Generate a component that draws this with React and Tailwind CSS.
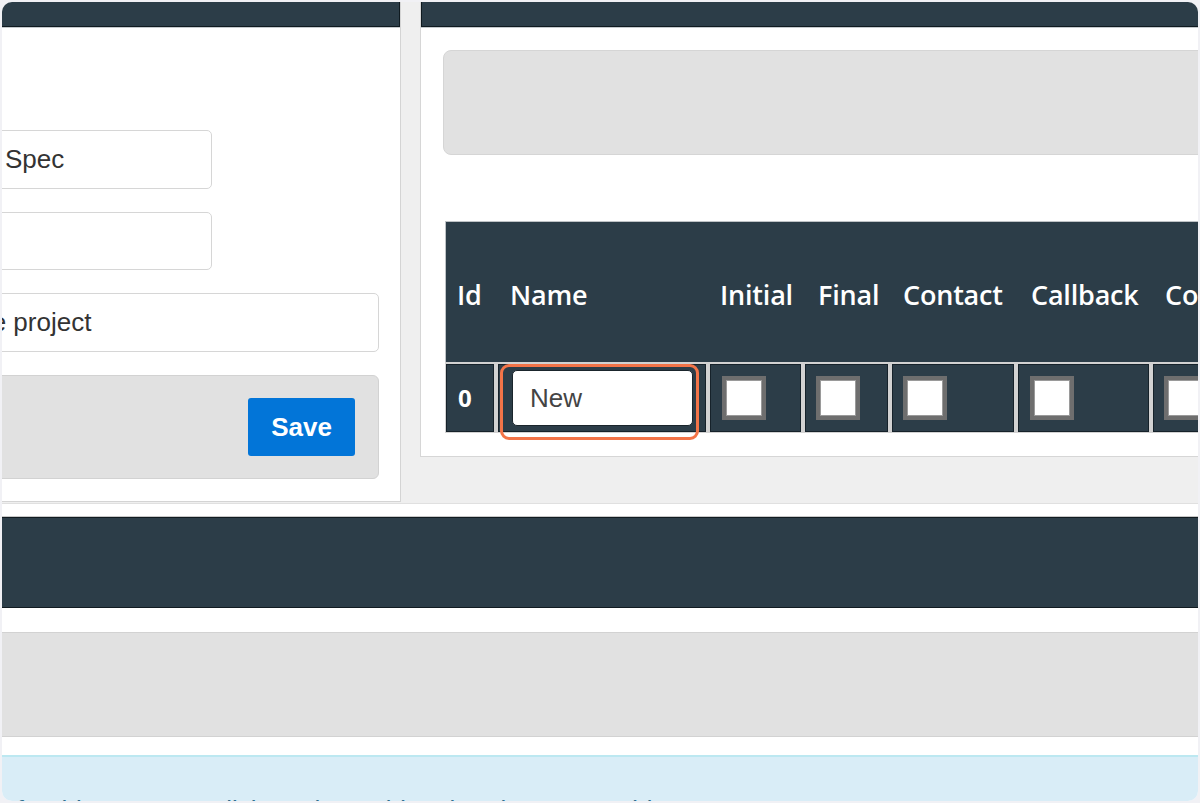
import React from "react";

const DARK = "bg-[#2c3d48]";

function Checkbox() {
  return <div className="w-[44px] h-[44px] bg-white border-[4px] border-[#6e6e6e] shadow-[inset_0_0_0_1px_#9a9a9a]" />;
}

export default function App() {
  return (
    <div className="w-[1200px] h-[803px] bg-[#f1f1f5] p-[2px]">
      <div className="w-full h-full rounded-[10px] overflow-hidden bg-white flex flex-col font-['Liberation_Sans',Arial,sans-serif]">
        {/* top row */}
        <div className="flex h-[502px] shrink-0 bg-[#efefef] border-b border-[#e0e0e0]">
          {/* left panel */}
          <div className="w-[399px] h-[500px] shrink-0 bg-white border-r border-[#d4d4d4] border-b flex flex-col overflow-hidden">
            <div className={`h-[25px] shrink-0 ${DARK} border-b border-r border-[#0f1a20] shadow-[0_1px_0_#c5cacd]`} />
            <div className="flex flex-col gap-[23px] mt-[103px]">
              <div className="-ml-[20px] w-[230px] h-[59px] border border-[#d6d6d6] rounded-[5px] flex items-center pl-[22px] text-[26px] text-[#333]">
                Spec
              </div>
              <div className="-ml-[20px] w-[230px] h-[58px] border border-[#d6d6d6] rounded-[5px]" />
              <div className="-ml-[20px] w-[397px] h-[59px] border border-[#d6d6d6] rounded-[5px] flex items-center overflow-hidden text-[26px] text-[#333]">
                <span className="ml-[-13px] whitespace-nowrap">the project</span>
              </div>
              <div className="-ml-[20px] w-[397px] h-[104px] bg-[#e1e1e1] border border-[#d2d2d2] rounded-[6px] flex items-center justify-end pr-[23px]">
                <button className="w-[107px] h-[58px] bg-[#0275d8] rounded-[3px] text-white font-bold text-[26px]">
                  Save
                </button>
              </div>
            </div>
          </div>

          {/* right panel */}
          <div className="ml-[19px] flex-1 h-[455px] bg-white border-l border-b border-[#d6d6d6] overflow-hidden flex flex-col">
            <div className={`h-[25px] shrink-0 ${DARK} border-b border-l border-[#0f1a20] shadow-[0_1px_0_#c5cacd]`} />
            <div className="pl-[22px] pt-[23px] flex flex-col">
              <div className="w-[800px] h-[105px] shrink-0 bg-[#e1e1e1] border border-[#d5d5d5] rounded-l-[8px]" />
              <div className="mt-[66px] ml-[2px] w-[800px] shrink-0">
                {/* header */}
                <div className={`h-[141px] ${DARK} border-t border-l border-[#bfc3c6] grid grid-cols-[48px_208px_91px_83px_122px_131px_120px] gap-x-[4px] pl-[1px] items-center pt-[6px] font-['Open_Sans',sans-serif] font-semibold text-[27px] tracking-[-0.2px] text-white`}>
                  <div className="pl-[10px]">Id</div>
                  <div className="pl-[11px]">Name</div>
                  <div className="pl-[9px]">Initial</div>
                  <div className="pl-[12px]">Final</div>
                  <div className="pl-[10px]">Contact</div>
                  <div className="pl-[12px]">Callback</div>
                  <div className="pl-[11px] whitespace-nowrap">Contact</div>
                </div>
                {/* row */}
                <div className="bg-[#d2d2d2] pt-[2px] pb-[1px] pl-[1px] grid grid-cols-[48px_208px_91px_83px_122px_131px_120px] gap-x-[4px]">
                  <div className={`h-[68px] ${DARK} border border-[#16222a] flex items-center pl-[11px] text-white font-['Open_Sans',sans-serif] font-bold text-[24px]`}>
                    0
                  </div>
                  <div className={`relative h-[68px] ${DARK} border border-[#16222a] flex items-center pl-[13px]`}>
                    <div className="w-[181px] h-[56px] bg-white rounded-[5px] border border-[#1a252c] flex items-center pl-[17px] text-[26px] text-[#444]">
                      New
                    </div>
                    <div className="absolute left-[1px] top-[-1px] w-[199px] h-[76px] border-[3px] border-[#f37448] rounded-[9px]" />
                  </div>
                  <div className={`h-[68px] ${DARK} border border-[#16222a] flex items-center pl-[11px]`}>
                    <Checkbox />
                  </div>
                  <div className={`h-[68px] ${DARK} border border-[#16222a] flex items-center pl-[10px]`}>
                    <Checkbox />
                  </div>
                  <div className={`h-[68px] ${DARK} border border-[#16222a] flex items-center pl-[10px]`}>
                    <Checkbox />
                  </div>
                  <div className={`h-[68px] ${DARK} border border-[#16222a] flex items-center pl-[11px]`}>
                    <Checkbox />
                  </div>
                  <div className={`h-[68px] ${DARK} border border-[#16222a] flex items-center pl-[10px]`}>
                    <Checkbox />
                  </div>
                </div>
              </div>
            </div>
          </div>
        </div>

        {/* bottom */}
        <div className="h-[13px] shrink-0" />
        <div className={`h-[91px] shrink-0 ${DARK} border-y border-[#111b21] shadow-[0_-1px_0_#c8c8c8]`} />
        <div className="h-[24px] shrink-0" />
        <div className="h-[105px] shrink-0 bg-[#e1e1e1] border-y border-[#d2d2d2]" />
        <div className="h-[18px] shrink-0" />
        <div className="flex-1 bg-[#d9edf7] border-t-2 border-[#bce8f1] overflow-hidden pt-[38px]">
          <p className="ml-[-176px] whitespace-nowrap text-[26px] leading-[30px] text-[#31708f]">
            No actions exist for this process. Click on the "Add Action" button to add one.
          </p>
        </div>
      </div>
    </div>
  );
}
